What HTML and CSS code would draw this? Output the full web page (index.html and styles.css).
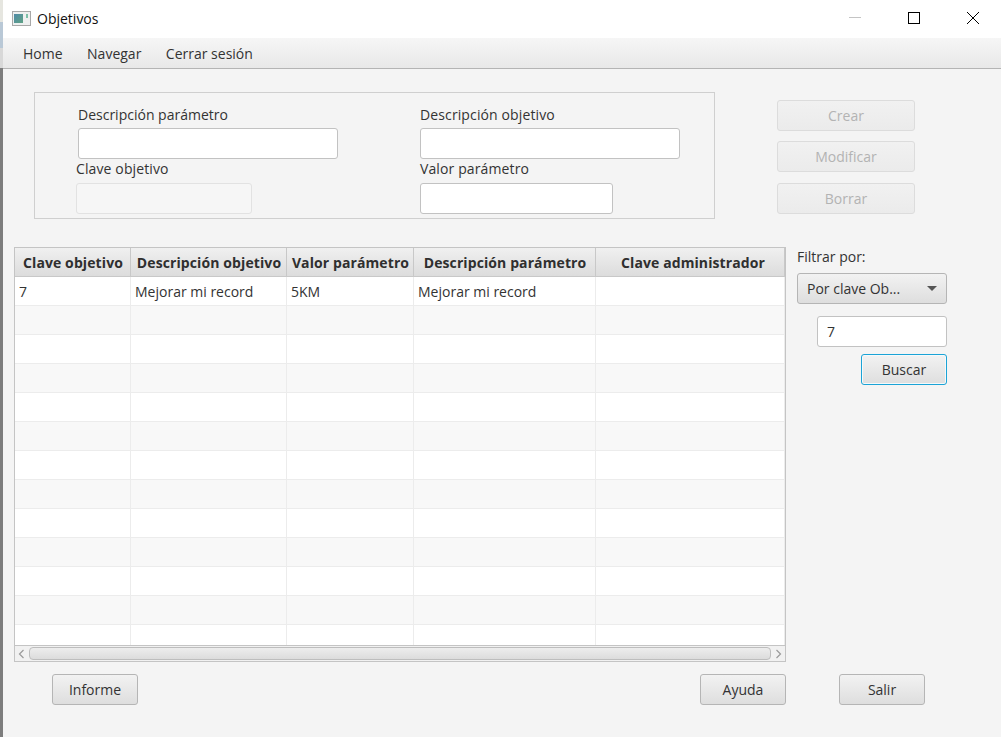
FILE: index.html
```html
<!DOCTYPE html>
<html lang="es">
<head>
    <meta charset="UTF-8">
    <meta name="viewport" content="width=device-width, initial-scale=1.0">
    <title>Objetivos</title>
    <link rel="stylesheet" href="styles.css">
</head>
<body>
    <div class="window">
        <div class="titlebar">
            <svg class="app-icon" width="19" height="15" viewBox="0 0 19 15">
                <defs>
                    <linearGradient id="appFill" x1="0" y1="0" x2="1" y2="1">
                        <stop offset="0" stop-color="#3f7fa0"/>
                        <stop offset="1" stop-color="#4f9a78"/>
                    </linearGradient>
                </defs>
                <rect x="0.5" y="0.5" width="18" height="14" fill="#eef0f0" stroke="#a8a8a8"/>
                <rect x="2" y="3" width="9" height="9" fill="url(#appFill)" opacity="0.9"/>
                <rect x="14" y="3" width="2" height="4" fill="#7cc0a8"/>
            </svg>
            <span class="title">Objetivos</span>
            <div class="controls">
                <svg width="14" height="14" viewBox="0 0 14 14"><path d="M1 6.5H13" stroke="#c4c4c4"/></svg>
                <svg width="14" height="14" viewBox="0 0 14 14"><rect x="1.5" y="1.5" width="11" height="11" fill="none" stroke="#000"/></svg>
                <svg width="14" height="14" viewBox="0 0 14 14"><path d="M1 1L13 13M13 1L1 13" stroke="#000"/></svg>
            </div>
        </div>
        <div class="menubar">
            <span>Home</span>
            <span>Navegar</span>
            <span>Cerrar sesión</span>
        </div>
        <div class="content">
            <div class="top-row">
                <div class="form-box">
                    <div class="field field-a">
                        <label>Descripción parámetro</label>
                        <input type="text" class="wide">
                    </div>
                    <div class="field field-b">
                        <label>Descripción objetivo</label>
                        <input type="text" class="wide">
                    </div>
                    <div class="field field-c">
                        <label>Clave objetivo</label>
                        <input type="text" class="short" disabled>
                    </div>
                    <div class="field field-d">
                        <label>Valor parámetro</label>
                        <input type="text" class="medium">
                    </div>
                </div>
                <div class="actions">
                    <button class="btn btn-off" disabled>Crear</button>
                    <button class="btn btn-off" disabled>Modificar</button>
                    <button class="btn btn-off btn-last" disabled>Borrar</button>
                </div>
            </div>
            <div class="middle-row">
                <div class="table-box">
                    <div class="table-clip">
                        <table>
                            <colgroup>
                                <col class="col1"><col class="col2"><col class="col3"><col class="col4"><col class="col5">
                            </colgroup>
                            <thead>
                                <tr>
                                    <th>Clave objetivo</th>
                                    <th>Descripción objetivo</th>
                                    <th>Valor parámetro</th>
                                    <th>Descripción parámetro</th>
                                    <th class="th-admin">Clave administrador</th>
                                </tr>
                            </thead>
                            <tbody>
                                <tr><td>7</td><td>Mejorar mi record</td><td>5KM</td><td>Mejorar mi record</td><td></td></tr>
                                <tr><td></td><td></td><td></td><td></td><td></td></tr>
                                <tr><td></td><td></td><td></td><td></td><td></td></tr>
                                <tr><td></td><td></td><td></td><td></td><td></td></tr>
                                <tr><td></td><td></td><td></td><td></td><td></td></tr>
                                <tr><td></td><td></td><td></td><td></td><td></td></tr>
                                <tr><td></td><td></td><td></td><td></td><td></td></tr>
                                <tr><td></td><td></td><td></td><td></td><td></td></tr>
                                <tr><td></td><td></td><td></td><td></td><td></td></tr>
                                <tr><td></td><td></td><td></td><td></td><td></td></tr>
                                <tr><td></td><td></td><td></td><td></td><td></td></tr>
                                <tr><td></td><td></td><td></td><td></td><td></td></tr>
                                <tr><td></td><td></td><td></td><td></td><td></td></tr>
                            </tbody>
                        </table>
                    </div>
                    <div class="scrollbar">
                        <svg width="14" height="16" viewBox="0 0 14 16"><path d="M8.5 4L4.5 8L8.5 12" fill="none" stroke="#9a9a9a" stroke-width="1.2"/></svg>
                        <div class="thumb"></div>
                        <svg width="14" height="16" viewBox="0 0 14 16"><path d="M5.5 4L9.5 8L5.5 12" fill="none" stroke="#9a9a9a" stroke-width="1.2"/></svg>
                    </div>
                </div>
                <div class="side">
                    <label class="filter-label">Filtrar por:</label>
                    <div class="combo">
                        <span>Por clave Ob...</span>
                        <i class="arrow"></i>
                    </div>
                    <input type="text" class="search" value="7">
                    <button class="btn btn-search">Buscar</button>
                </div>
            </div>
            <div class="bottom-row">
                <button class="btn">Informe</button>
                <button class="btn btn-help">Ayuda</button>
                <button class="btn btn-exit">Salir</button>
            </div>
        </div>
    </div>
</body>
</html>
```

FILE: styles.css
```css
* {
    box-sizing: border-box;
}
html, body {
    margin: 0;
    height: 100%;
    overflow: hidden;
}
body {
    font-family: "Open Sans", "Noto Sans", sans-serif;
    font-size: 14px;
    color: #333;
    background: linear-gradient(#e6e6e0 0, #e6e6e0 22px, #b9c8d6 22px, #b9c8d6 48px, #d8d8d8 48px, #d8d8d8 68px, #7d7d7d 68px);
    padding-left: 3px;
}
.window {
    height: 737px;
    background-color: #f4f4f4;
    display: flex;
    flex-direction: column;
}
.titlebar {
    height: 38px;
    background-color: #fff;
    display: flex;
    align-items: center;
    padding-left: 9px;
    padding-bottom: 2px;
    color: #111;
}
.title {
    margin-left: 6px;
}
.controls {
    margin-left: auto;
    margin-right: 21px;
    display: flex;
    gap: 45px;
}
.menubar {
    height: 31px;
    background: linear-gradient(#f6f6f6, #e8e8e8);
    border-bottom: 1px solid #b4b4b4;
    display: flex;
    align-items: center;
    gap: 24.5px;
    padding-left: 20px;
}
.content {
    flex: 1;
    padding: 23px 0 0 11px;
}
.top-row {
    display: flex;
    align-items: flex-start;
}
.form-box {
    margin-left: 20px;
    width: 681px;
    height: 127px;
    border: 1px solid #cfcfcf;
    display: grid;
    grid-template-columns: 344px 1fr;
    grid-template-rows: 66px 1fr;
}
.field label {
    display: block;
    line-height: 19px;
    margin-bottom: 4px;
}
.field-a {
    padding: 12px 0 0 43px;
}
.field-b {
    padding: 12px 0 0 41px;
}
.field-c {
    padding: 0 0 0 41px;
}
.field-d {
    padding: 0 0 0 41px;
}
.field-b label, .field-c label, .field-d label {
    letter-spacing: 0.12px;
}
.field-c label, .field-d label {
    margin-bottom: 5px;
}
input {
    display: block;
    height: 31px;
    border: 1px solid #c2c2c2;
    border-radius: 3px;
    background-color: #fff;
    font: inherit;
    color: #333;
    padding: 0 9px;
}
.wide {
    width: 260px;
}
.medium {
    width: 193px;
}
.short {
    width: 176px;
    background-color: #f6f6f6;
    border-color: #e2e2e2;
}
.actions {
    margin-left: 62px;
    margin-top: 8px;
    display: flex;
    flex-direction: column;
    gap: 10px;
}
.btn {
    width: 86px;
    height: 31px;
    border: 1px solid #b5b5b5;
    border-radius: 3px;
    background: linear-gradient(#f2f2f2, #dedede);
    font: inherit;
    color: #333;
    padding: 0;
}
.btn-off {
    width: 138px;
    border-color: #dcdcdc;
    background: linear-gradient(#f1f1f1, #ebebeb);
    color: #b3b3b3;
}
.btn-last {
    margin-top: 1px;
}
.middle-row {
    display: flex;
    align-items: flex-start;
    margin-top: 28px;
}
.table-box {
    width: 772px;
    height: 415px;
    border: 1px solid #c4c4c4;
}
.table-clip {
    height: 397px;
    overflow: hidden;
    background-color: #fff;
}
table {
    width: 770px;
    table-layout: fixed;
    border-collapse: separate;
    border-spacing: 0;
}
.col1 { width: 116px; }
.col2 { width: 156px; }
.col3 { width: 127px; }
.col4 { width: 182px; }
.col5 { width: 189px; }
th {
    height: 29px;
    padding: 0 0 0 1px;
    font-weight: 700;
    text-align: center;
    white-space: nowrap;
    letter-spacing: 0.1px;
    color: #2f2f2f;
    background: linear-gradient(#f0f0f0, #dcdcdc);
    border-right: 1px solid #c8c8c8;
    border-bottom: 1px solid #c8c8c8;
}
.th-admin {
    padding-left: 6px;
}
td {
    height: 29px;
    padding: 0 4px;
    border-right: 1px solid #ececec;
    border-bottom: 1px solid #ececec;
    white-space: nowrap;
}
tbody tr:nth-child(even) td {
    background-color: #f8f8f8;
}
.scrollbar {
    height: 16px;
    border-top: 1px solid #c4c4c4;
    background-color: #f1f1f1;
    display: flex;
    align-items: center;
}
.thumb {
    flex: 1;
    height: 13px;
    border: 1px solid #bdbdbd;
    border-radius: 4px;
    background: linear-gradient(#ededed, #dcdcdc);
}
.side {
    margin-left: 11px;
    width: 150px;
    display: flex;
    flex-direction: column;
}
.filter-label {
    line-height: 19px;
    margin-bottom: 7px;
}
.combo {
    height: 31px;
    border: 1px solid #b5b5b5;
    border-radius: 3px;
    background: linear-gradient(#f2f2f2, #dedede);
    display: flex;
    align-items: center;
    justify-content: space-between;
    padding: 0 9px;
}
.arrow {
    width: 0;
    height: 0;
    border-left: 5px solid transparent;
    border-right: 5px solid transparent;
    border-top: 5px solid #555;
}
.search {
    width: 130px;
    margin: 12px 0 7px 20px;
}
.btn-search {
    align-self: flex-end;
    border-color: #1ba3d6;
    box-shadow: inset 0 0 0 1px #f4f9fb;
}
.bottom-row {
    display: flex;
    margin-top: 12px;
    padding-left: 38px;
}
.btn-help {
    margin-left: 562px;
}
.btn-exit {
    margin-left: 53px;
}
```
